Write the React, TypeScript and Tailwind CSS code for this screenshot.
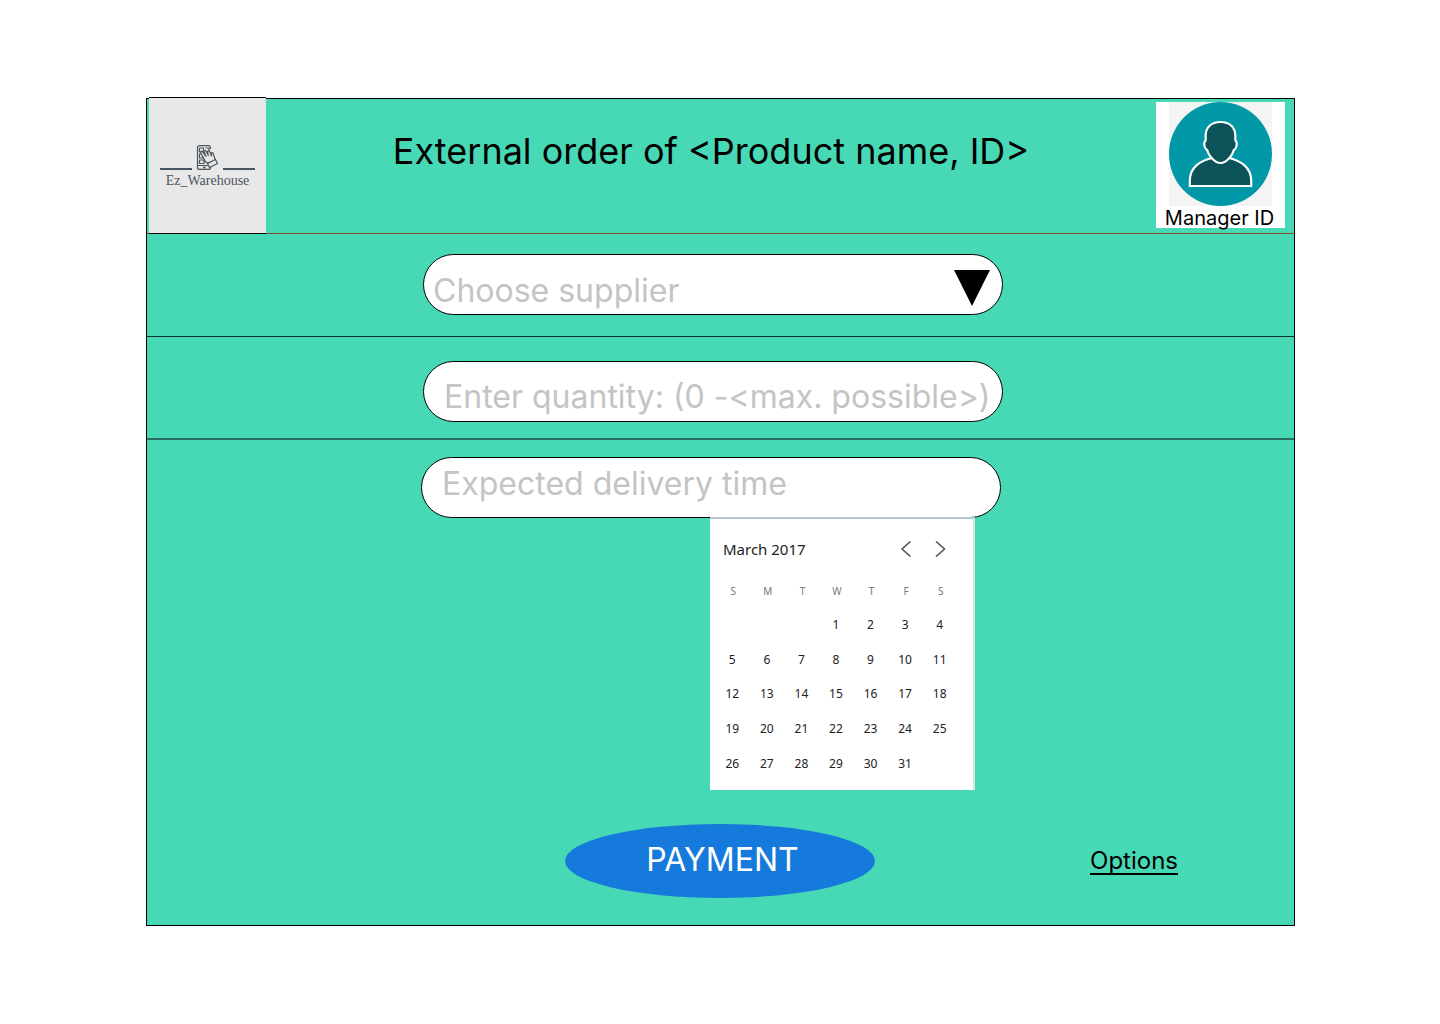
import React from "react";

const weekdays = ["S", "M", "T", "W", "T", "F", "S"];

const weeks: (number | null)[][] = [
  [null, null, null, 1, 2, 3, 4],
  [5, 6, 7, 8, 9, 10, 11],
  [12, 13, 14, 15, 16, 17, 18],
  [19, 20, 21, 22, 23, 24, 25],
  [26, 27, 28, 29, 30, 31, null],
];

function Logo() {
  return (
    <div className="-mt-0.5 ml-0.5 flex h-[137px] w-[117px] flex-col items-center border-y border-black bg-[#e8e8e8] pt-12">
      <div className="flex h-6 items-end">
        <div className="h-0.5 w-8 bg-[#4a545e]" />
        <svg className="mx-1 h-[25px] w-[23px]" viewBox="0 0 23 25" fill="none" stroke="#4a545e" strokeWidth="1.2" strokeLinejoin="round" aria-hidden="true">
          <path d="M14.500 4V2.600a2 2 0 0 0-2-2h-9a2 2 0 0 0-2 2v19.800a2 2 0 0 0 2 2h9a2 2 0 0 0 2-2V21" />
          <path d="M1.500 20.500H13M3.500 3h4v4h-4zM9.500 3H13v3M3.500 9h3v4h-3zM3.500 15h4.500v3.500H3.500z" />
          <path d="M7 22.500h2.500" strokeWidth="1.800" />
          <path d="M11.500 18C9 17 8 15 7.500 13L4.500 7.500c.2-1.300 1.200-1.500 2.200-.5L10 11.500 8 6.500c.5-1.200 1.700-1.200 2.300 0l2 4-.8-4c.6-1 1.700-.9 2.200.2L15.500 11l-.3-3c.8-.7 1.700-.4 2 .6l1.600 4.900v2z" fill="#e8e8e8" />
          <path d="M11.500 18.500l8-4 2 4-8 4z" fill="#e8e8e8" />
        </svg>
        <div className="h-0.5 w-8 bg-[#4a545e]" />
      </div>
      <div className="pt-px font-['Liberation_Serif',serif] text-sm leading-5 text-[#4a545e]">Ez_Warehouse</div>
    </div>
  );
}

function ManagerCard() {
  return (
    <div className="mr-[9px] mt-[3px] flex h-[126px] w-[129px] flex-col items-center bg-white">
      <svg className="h-[104px] w-[103px] shrink-0" viewBox="0 0 104 104" preserveAspectRatio="none" aria-hidden="true">
        <rect width="104" height="104" fill="#f4f4f4" />
        <circle cx="52" cy="52" r="52" fill="#0097a7" />
        <path d="M21 84V79c0-14 10-20 24-23.500h14C73 59 83 65 83 79v5z" fill="#0b5259" stroke="#fff" strokeWidth="2.2" />
        <path d="M52 20c-10 0-15 6-15 14v4.500c-2.500 2-1.500 8 1.500 9.500 1.500 6 8 13 13.500 13s12-7 13.500-13c3-1.500 4-7.500 1.500-9.500V34c0-8-5-14-15-14z" fill="#0b5259" stroke="#fff" strokeWidth="2.2" />
      </svg>
      <div className="whitespace-nowrap pr-0.5 text-xl leading-6 text-black">Manager ID</div>
    </div>
  );
}

function Calendar() {
  return (
    <div className="-mt-px ml-[289px] h-[273px] w-[265px] border-r-2 border-t-2 border-r-[#dcdfe0] border-t-[#b4c6cd] bg-white font-['Noto_Sans',sans-serif] text-[#222]">
      <div className="flex h-[54px] items-center pl-[13px] pr-[25px] pt-1.5">
        <h2 className="grow text-[15px] leading-5">March 2017</h2>
        <div className="flex gap-[18px] text-[#555]">
          <button type="button" aria-label="Previous month" className="flex h-4 w-4 items-center justify-center">
            <svg className="h-4 w-4" viewBox="0 0 16 16" fill="none" stroke="currentColor" strokeWidth="1.600"><path d="M12.500.500L4 8l8.500 7.500" /></svg>
          </button>
          <button type="button" aria-label="Next month" className="flex h-4 w-4 items-center justify-center">
            <svg className="h-4 w-4" viewBox="0 0 16 16" fill="none" stroke="currentColor" strokeWidth="1.600"><path d="M4 .500L12.500 8 4 15.500" /></svg>
          </button>
        </div>
      </div>
      <table className="ml-[5px] h-[208px] w-[242px] table-fixed border-collapse text-center text-xs leading-4">
        <thead>
          <tr className="h-[35px]">
            {weekdays.map((day, i) => (
              <th key={i} scope="col" className="p-0 pl-0.5 text-[10px] font-normal text-[#777]">{day}</th>
            ))}
          </tr>
        </thead>
        <tbody>
          {weeks.map((week, i) => (
            <tr key={i}>
              {week.map((day, j) => (
                <td key={j} className="p-0">{day !== null && <button type="button">{day}</button>}</td>
              ))}
            </tr>
          ))}
        </tbody>
      </table>
    </div>
  );
}

export default function App() {
  return (
    <main className="min-h-screen bg-white pb-[98px] pl-[146px] pr-[145px] pt-[98px] font-['Inter',sans-serif]">
      <form className="flex min-h-[828px] flex-col border border-black bg-[#47d9b6]" onSubmit={(e) => e.preventDefault()}>
        <header className="flex h-[135px] items-start justify-between border-b border-[#8a4a2c]">
          <Logo />
          <h1 className="pt-[30px] text-4xl leading-[44px] text-black">External order of &lt;Product name, ID&gt;</h1>
          <ManagerCard />
        </header>

        <section className="flex h-[103px] justify-center border-b border-[#12332c] pr-[15px] pt-5">
          <div className="relative h-[61px] w-[580px]">
            <select aria-label="Supplier" defaultValue="" className="h-full w-full appearance-none rounded-full border border-black bg-white pl-[9px] pt-3 text-[32px] leading-10 text-[#c4c4c4]">
              <option value="">Choose supplier</option>
            </select>
            <svg className="pointer-events-none absolute right-[13px] top-4 h-9 w-9" viewBox="0 0 36 36" aria-hidden="true"><path d="M0 0h36L18 36z" /></svg>
          </div>
        </section>

        <section className="flex h-[103px] justify-center border-b-2 border-[#296f5f] pr-[15px] pt-6">
          <input type="text" aria-label="Quantity" placeholder="Enter quantity: (0 -&lt;max. possible&gt;)" className="h-[61px] w-[580px] rounded-full border border-black bg-white pl-5 pt-2.5 text-[32px] leading-10 placeholder:text-[#c4c4c4] placeholder:opacity-100" />
        </section>

        <section className="flex justify-center pr-[19px] pt-[17px]">
          <div className="w-[580px]">
            <input type="text" aria-label="Expected delivery time" placeholder="Expected delivery time" className="block h-[61px] w-full rounded-full border border-black bg-white pb-2 pl-5 text-[32px] leading-10 placeholder:text-[#c4c4c4] placeholder:opacity-100" />
            <Calendar />
          </div>
        </section>

        <footer className="grid grid-cols-3 items-center pt-[34px]">
          <button type="submit" className="col-start-2 h-[74px] w-[310px] justify-self-center rounded-[50%] bg-[#157adc] pb-0.5 pl-1 text-[32px] leading-10 text-white">PAYMENT</button>
          <a href="#options" className="mr-[116px] justify-self-end text-2xl leading-8 text-black underline decoration-2 underline-offset-4 [text-decoration-skip-ink:none]">Options</a>
        </footer>
      </form>
    </main>
  );
}
